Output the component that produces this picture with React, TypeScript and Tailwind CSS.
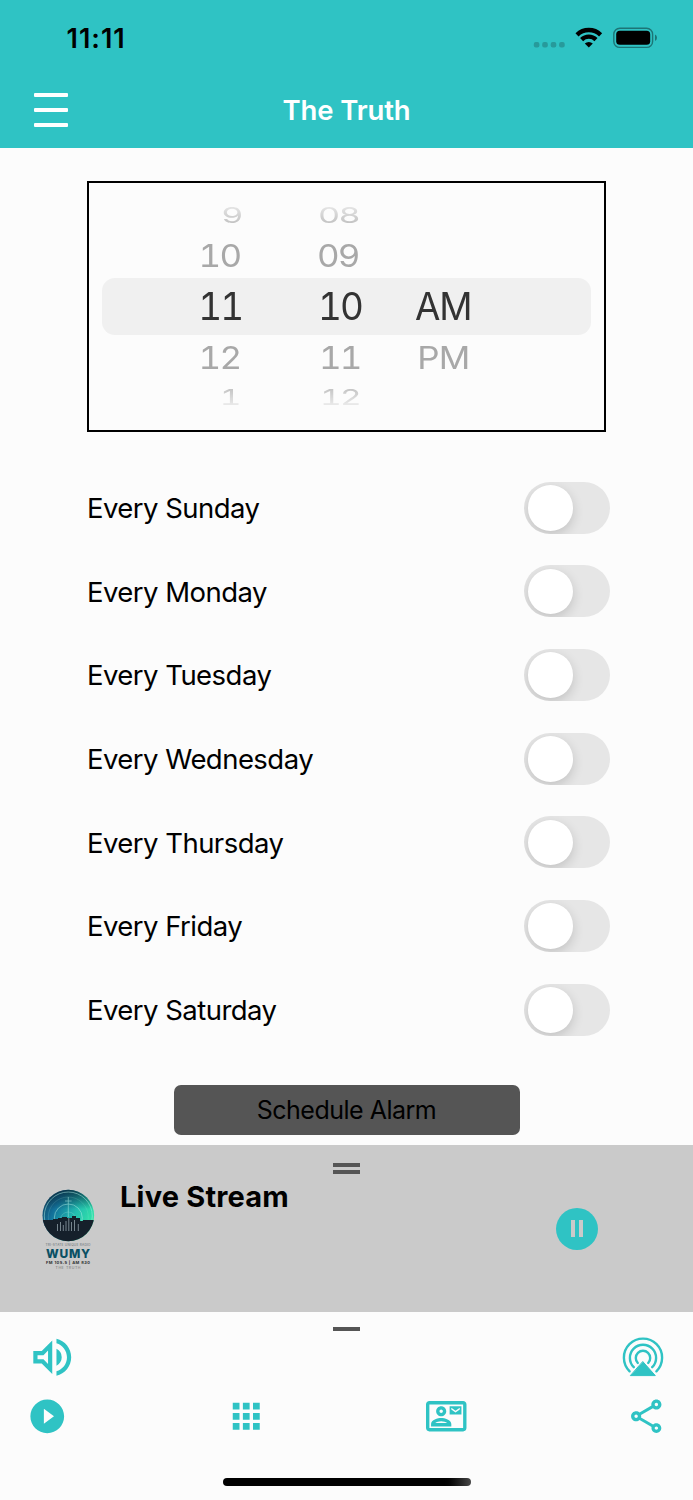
import React, { useState } from 'react';
import { MdApps, MdOutlineContactMail, MdOutlineShare, MdOutlineVolumeUp, MdPlayCircleFilled } from 'react-icons/md';

const days = ['Sunday', 'Monday', 'Tuesday', 'Wednesday', 'Thursday', 'Friday', 'Saturday'];

const wheelRows = [
  { hour: '9', minute: '08', period: '', row: 'h-[37px] text-[#bdbdbd] mask-t-from-20%', hourCol: 'w-[153px]', minuteCol: 'ml-[76px] w-[97px]', text: 'scale-x-[0.9] scale-y-[0.57]' },
  { hour: '10', minute: '09', period: '', row: 'h-[44px] text-[#a8a8a8]', hourCol: 'w-[151px]', minuteCol: 'ml-[77px] w-[98px]', text: 'scale-x-[0.92] scale-y-[0.83]' },
  { hour: '11', minute: '10', period: 'AM', row: 'h-[57px] text-[#333333]', hourCol: 'w-[153px]', minuteCol: 'ml-[76px] w-[96px]', text: 'scale-x-[0.97]' },
  { hour: '12', minute: '11', period: 'PM', row: 'h-[45px] text-[#a8a8a8]', hourCol: 'w-[151px]', minuteCol: 'ml-[79px] w-[96px]', text: 'scale-x-[0.92] scale-y-[0.83]' },
  { hour: '1', minute: '12', period: '', row: 'h-[34px] pt-[2px] text-[#bdbdbd] mask-b-from-20%', hourCol: 'w-[151px]', minuteCol: 'ml-[80px] w-[95px]', text: 'scale-x-[0.88] scale-y-[0.57]' },
];

const StatusBar: React.FC = () => (
  <div className="flex h-[74px] items-start justify-between pl-[66.5px] pr-[36px] pt-[22px] text-black">
    <span className="text-[27px] leading-[33px] font-semibold tracking-[1px]">11:11</span>
    <svg width="125" height="32" viewBox="532 22 125 32">
      <g fill="#279a9b">
        <rect x="533.8" y="42" width="5.6" height="5.6" rx="2" />
        <rect x="542.2" y="42" width="5.6" height="5.6" rx="2" />
        <rect x="550.7" y="42" width="5.6" height="5.6" rx="2" />
        <rect x="559.1" y="42" width="5.6" height="5.6" rx="2" />
      </g>
      <g fill="none" stroke="#000" strokeWidth="4.4">
        <path d="M577 34.8a17 17 0 0 1 23.6 0" />
        <path d="M581.6 39.6a10.3 10.3 0 0 1 14.4 0" />
      </g>
      <path d="M588.8 47.6l-4-4.1a5.9 5.9 0 0 1 8 0z" fill="#000" />
      <rect x="613.8" y="28.2" width="38.8" height="19.2" rx="6" fill="none" stroke="#1c7576" strokeWidth="1.4" />
      <rect x="616.2" y="30.8" width="34" height="14" rx="3.6" />
      <path d="M655 34.5q2 1 2 3.3t-2 3.3z" fill="#1c7576" />
    </svg>
  </div>
);

const Header: React.FC = () => (
  <div className="relative flex h-[74px] justify-center pt-[19px]">
    <button aria-label="Menu" className="absolute left-[33.5px] top-[19px] flex flex-col gap-[11.5px]">
      <span className="h-[3.5px] w-[34px] rounded-[1px] bg-white" />
      <span className="h-[3.5px] w-[34px] rounded-[1px] bg-white" />
      <span className="h-[3.5px] w-[34px] rounded-[1px] bg-white" />
    </button>
    <h1 className="text-[27.5px] leading-[34px] font-semibold tracking-[-0.1px] text-white">The Truth</h1>
  </div>
);

const TimePicker: React.FC = () => (
  <div className="relative ml-[87px] mt-[33px] h-[251px] w-[519px] border-2 border-black pt-[13px]">
    <div className="absolute left-[13px] top-[95px] h-[57px] w-[489px] rounded-[13px] bg-[#f0f0f0]" />
    {wheelRows.map(r => (
      <div key={r.hour} className={`relative flex items-center text-[38px] leading-none tracking-[-2px] tabular-nums ${r.row}`}>
        <span className={`flex justify-end ${r.hourCol}`}><span className={`origin-right ${r.text}`}>{r.hour}</span></span>
        <span className={`flex ${r.minuteCol}`}><span className={`origin-left ${r.text}`}>{r.minute}</span></span>
        <span className={`${r.text} tracking-[-1px]`}>{r.period}</span>
      </div>
    ))}
  </div>
);

const DayRow: React.FC<{ day: string }> = ({ day }) => {
  const [on, setOn] = useState(false);

  return (
    <div className="flex h-[83.67px] items-center justify-between">
      <span className="pt-[1.5px] text-[27.5px] tracking-[-0.54px] text-black">Every {day}</span>
      <button
        role="switch"
        aria-checked={on}
        aria-label={day}
        onClick={() => setOn(!on)}
        className={`flex h-[52px] w-[86px] items-center overflow-hidden rounded-full px-[3.5px] ${on ? 'justify-end bg-[#2fc3c4]' : 'bg-[#e6e6e6]'}`}
      >
        <span className="size-[45.5px] rounded-full bg-white shadow-[0_4px_12px_rgba(0,0,0,0.16)]" />
      </button>
    </div>
  );
};

const StationLogo: React.FC = () => (
  <svg width="60" height="86" viewBox="38 1186 60 86" fontFamily="Inter, sans-serif" textAnchor="middle">
    <defs>
      <linearGradient id="sky" x1="0" y1="0.1" x2="1" y2="0.6">
        <stop offset="0" stopColor="#123c55" />
        <stop offset="0.3" stopColor="#12709a" />
        <stop offset="0.65" stopColor="#22bdb0" />
        <stop offset="1" stopColor="#35eaa6" />
      </linearGradient>
      <linearGradient id="shade" x1="0" y1="0" x2="0" y2="1">
        <stop offset="0" stopColor="#071d2b" stopOpacity="0.75" />
        <stop offset="0.38" stopColor="#071d2b" stopOpacity="0" />
      </linearGradient>
      <clipPath id="disc"><circle cx="68.3" cy="1215.5" r="25.8" /></clipPath>
    </defs>
    <g clipPath="url(#disc)">
      <rect x="42" y="1189" width="53" height="53" fill="url(#sky)" />
      <rect x="42" y="1189" width="53" height="53" fill="url(#shade)" />
      <g fill="none" stroke="#a7e9e2" strokeWidth="0.7" opacity="0.75">
        <circle cx="68.3" cy="1216" r="24" />
        <circle cx="68.3" cy="1217" r="20" opacity="0.3" />
        <circle cx="68.3" cy="1218" r="14" />
        <circle cx="68.3" cy="1220" r="8" opacity="0.5" />
        <path d="M68.3 1197v20M65 1201h6.6" />
      </g>
      <path d="M42 1242v-22h11v-1h5v-1h4v-1h5v1h5v-2h4v2h4v3h3v-1h13v22z" fill="#15202b" />
      <path d="M57.5 1224v7M60.5 1222v9M63.3 1225v6M66 1221v10M68.8 1218v13M71.5 1222v9M74.5 1220v11M78.3 1224v7" stroke="#8fa0a8" strokeWidth="0.8" />
    </g>
    <text x="68" y="1246.3" fontSize="3.2" fill="#686f73" textLength="45">TRI-STATE UNIQUE RADIO</text>
    <text x="68" y="1257.6" fontSize="12" fontWeight="800" fill="#0b5064" textLength="44">WUMY</text>
    <text x="68" y="1263.6" fontSize="4" fontWeight="700" fill="#2a2d2f" textLength="44">FM 105.5 | AM 830</text>
    <text x="68" y="1268.7" fontSize="3.6" fill="#777" textLength="25">THE TRUTH</text>
  </svg>
);

const Player: React.FC = () => (
  <div className="relative flex h-[167px] items-start bg-[#cacaca] pl-[38px] pr-[95px]">
    <div className="absolute left-[333px] top-[18px] flex w-[27px] flex-col gap-[3.5px]">
      <span className="h-[3.5px] bg-[#555555]" />
      <span className="h-[3.5px] bg-[#555555]" />
    </div>
    <div className="mt-[41px]"><StationLogo /></div>
    <h2 className="ml-[22px] mt-[34px] flex-1 text-[29px] leading-[36px] font-bold tracking-[0.2px] text-black">Live Stream</h2>
    <button aria-label="Pause" className="mt-[62.5px] flex size-[42px] items-center justify-center gap-[3.8px] rounded-full bg-[#2fc3c4]">
      <span className="h-[17px] w-[4.5px] bg-[#cacaca]" />
      <span className="h-[17px] w-[4.5px] bg-[#cacaca]" />
    </button>
  </div>
);

const AirPlayIcon: React.FC = () => (
  <svg width="42" height="42" viewBox="0 0 42 42" fill="none" stroke="currentColor" strokeWidth="2.4" strokeLinecap="round">
    <path d="M7.6 34.3A19.1 19.1 0 1 1 34.4 34.3" />
    <path d="M11.8 30.2A13.1 13.1 0 1 1 30.2 30.2" />
    <path d="M15.8 26A7.2 7.2 0 1 1 26.2 26" />
    <path d="M21 24.8L33.3 38.6H8.7z" fill="currentColor" strokeWidth="1" strokeLinejoin="round" />
  </svg>
);

const BottomBar: React.FC = () => (
  <div className="h-[188px] pt-[15px] text-[#2fc3c4]">
    <div className="mx-auto h-[4px] w-[27px] bg-[#555555]" />
    <div className="mt-[1px] flex h-[51px] items-center justify-between pl-[26.5px] pr-[29.5px]">
      <MdOutlineVolumeUp size={50.5} />
      <AirPlayIcon />
    </div>
    <div className="mt-[13px] flex items-center justify-between px-[26.7px]">
      <MdPlayCircleFilled size={40.5} />
      <MdApps size={40.5} />
      <MdOutlineContactMail size={40.5} />
      <MdOutlineShare size={40.5} />
    </div>
    <div className="mx-auto mt-[41px] h-[8.5px] w-[248px] rounded-full bg-linear-to-r from-black from-88% to-[#484848]" />
  </div>
);

export default function App() {
  return (
    <div className="flex h-[1500px] w-[693px] flex-col overflow-hidden bg-[#fcfcfc] font-[Inter,sans-serif]">
      <div className="h-[148px] bg-[#2fc3c4]">
        <StatusBar />
        <Header />
      </div>
      <div className="h-[997px]">
        <TimePicker />
        <div className="mt-[34px] pl-[87px] pr-[83px]">
          {days.map(day => <DayRow key={day} day={day} />)}
        </div>
        <button className="mx-auto mt-[33px] block h-[50px] w-[346px] rounded-[7px] bg-[#555555] pt-[2px] text-[25px] tracking-[-0.5px] text-black">
          Schedule Alarm
        </button>
      </div>
      <Player />
      <BottomBar />
    </div>
  );
}
